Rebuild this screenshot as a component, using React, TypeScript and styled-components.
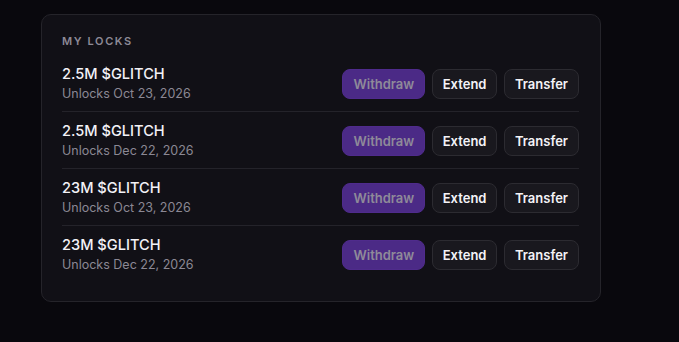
import React from "react";
import styled, { createGlobalStyle } from "styled-components";

const Global = createGlobalStyle`
  html, body { margin: 0; padding: 0; background: #09080d; }
  body { font-family: Inter, "Noto Sans", sans-serif; -webkit-font-smoothing: antialiased; }
`;

const Page = styled.div`
  padding: 14px 0 0 41px;
`;

const Card = styled.section`
  width: 560px;
  box-sizing: border-box;
  background: #111016;
  border: 1px solid #25242a;
  border-radius: 10px;
  padding: 19px 21px 19px 20px;
`;

const Title = styled.h2`
  margin: 0 0 6px 0;
  font-size: 11px;
  line-height: 15px;
  font-weight: 600;
  letter-spacing: 1.6px;
  text-transform: uppercase;
  color: #8d8a96;
`;

const Row = styled.div<{ $first?: boolean }>`
  display: flex;
  align-items: center;
  justify-content: space-between;
  padding: 9px 0 8px 0;
  border-top: ${(p) => (p.$first ? "none" : "1px solid #24232a")};
`;

const Info = styled.div`
  display: flex;
  flex-direction: column;
  gap: 1px;
`;

const Amount = styled.div`
  font-size: 14.6px;
  line-height: 20px;
  font-weight: 500;
  color: #f3f2f6;
`;

const Sub = styled.div`
  font-size: 12.5px;
  line-height: 18px;
  color: #8b8894;
`;

const Actions = styled.div`
  display: flex;
  gap: 6.5px;
`;

const Button = styled.button<{ $primary?: boolean }>`
  height: 30px;
  box-sizing: border-box;
  padding: 0 10px;
  border-radius: 8px;
  font-family: inherit;
  font-size: 13px;
  font-weight: 600;
  cursor: pointer;
  border: 1px solid ${(p) => (p.$primary ? "#4f2b8c" : "#2c2b31")};
  background: ${(p) => (p.$primary ? "#4b2a86" : "#19181e")};
  color: ${(p) => (p.$primary ? "#8f8a99" : "#f4f3f7")};
`;

const locks = [
  { amount: "2.5M $GLITCH", date: "Oct 23, 2026" },
  { amount: "2.5M $GLITCH", date: "Dec 22, 2026" },
  { amount: "23M $GLITCH", date: "Oct 23, 2026" },
  { amount: "23M $GLITCH", date: "Dec 22, 2026" },
];

export default function App() {
  return (
    <>
      <Global />
      <Page>
        <Card>
          <Title>My Locks</Title>
          {locks.map((l, i) => (
            <Row key={i} $first={i === 0}>
              <Info>
                <Amount>{l.amount}</Amount>
                <Sub>Unlocks {l.date}</Sub>
              </Info>
              <Actions>
                <Button $primary>Withdraw</Button>
                <Button>Extend</Button>
                <Button>Transfer</Button>
              </Actions>
            </Row>
          ))}
        </Card>
      </Page>
    </>
  );
}
